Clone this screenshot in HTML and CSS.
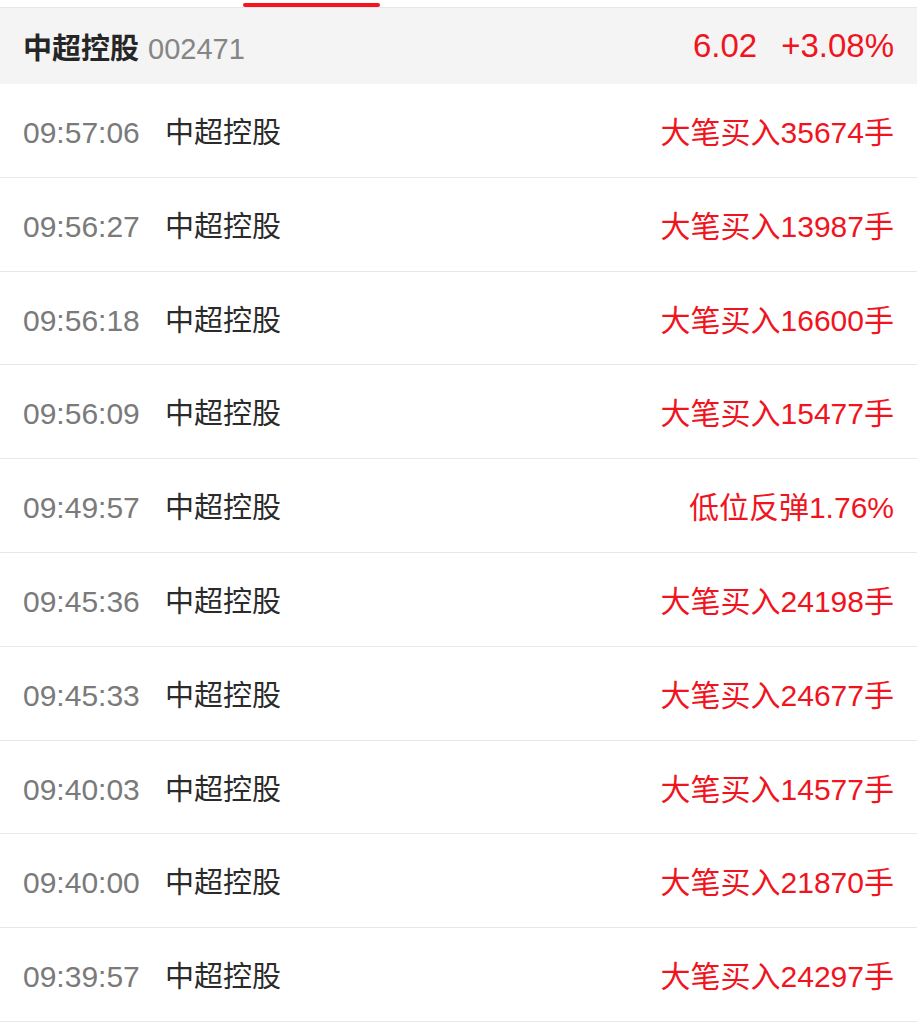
FILE: index.html
```html
<!DOCTYPE html>
<html lang="zh-CN">
<head>
    <meta charset="UTF-8">
    <meta name="viewport" content="width=device-width, initial-scale=1.0">
    <title>中超控股 异动</title>
    <link rel="stylesheet" href="styles.css">
</head>
<body>
    <div class="tabbar">
        <span class="tab-indicator"></span>
    </div>

    <div class="stock-header">
        <div class="stock-title">
            <span class="stock-name">中超控股</span>
            <span class="stock-code">002471</span>
        </div>
        <div class="stock-quote">
            <span class="price">6.02</span>
            <span class="change">+3.08%</span>
        </div>
    </div>

    <ul class="event-list">
        <li class="event-row">
            <span class="event-time">09:57:06</span>
            <span class="event-name">中超控股</span>
            <span class="event-desc">大笔买入35674手</span>
        </li>
        <li class="event-row">
            <span class="event-time">09:56:27</span>
            <span class="event-name">中超控股</span>
            <span class="event-desc">大笔买入13987手</span>
        </li>
        <li class="event-row">
            <span class="event-time">09:56:18</span>
            <span class="event-name">中超控股</span>
            <span class="event-desc">大笔买入16600手</span>
        </li>
        <li class="event-row">
            <span class="event-time">09:56:09</span>
            <span class="event-name">中超控股</span>
            <span class="event-desc">大笔买入15477手</span>
        </li>
        <li class="event-row">
            <span class="event-time">09:49:57</span>
            <span class="event-name">中超控股</span>
            <span class="event-desc">低位反弹1.76%</span>
        </li>
        <li class="event-row">
            <span class="event-time">09:45:36</span>
            <span class="event-name">中超控股</span>
            <span class="event-desc">大笔买入24198手</span>
        </li>
        <li class="event-row">
            <span class="event-time">09:45:33</span>
            <span class="event-name">中超控股</span>
            <span class="event-desc">大笔买入24677手</span>
        </li>
        <li class="event-row">
            <span class="event-time">09:40:03</span>
            <span class="event-name">中超控股</span>
            <span class="event-desc">大笔买入14577手</span>
        </li>
        <li class="event-row">
            <span class="event-time">09:40:00</span>
            <span class="event-name">中超控股</span>
            <span class="event-desc">大笔买入21870手</span>
        </li>
        <li class="event-row">
            <span class="event-time">09:39:57</span>
            <span class="event-name">中超控股</span>
            <span class="event-desc">大笔买入24297手</span>
        </li>
    </ul>
</body>
</html>
```

FILE: styles.css
```css
body {
    margin: 0;
    background: #ffffff;
    font-family: "Liberation Sans", "Noto Sans CJK SC", sans-serif;
    overflow: hidden;
}

.tabbar {
    height: 8px;
    padding: 3px 0 0 243px;
    border-bottom: 1px solid #e6e6e6;
    box-sizing: border-box;
}

.tab-indicator {
    display: block;
    width: 137px;
    height: 4px;
    background: #f5141e;
    border-radius: 2px;
}

.stock-header {
    display: flex;
    justify-content: space-between;
    align-items: center;
    height: 76px;
    padding: 0 23px;
    background: #f4f4f4;
}

.stock-title {
    display: flex;
    align-items: baseline;
    gap: 9px;
}

.stock-name {
    font-family: "Noto Sans CJK SC", sans-serif;
    font-size: 29px;
    font-weight: 700;
    color: #262626;
}

.stock-code {
    font-size: 29px;
    color: #858585;
}

.stock-quote {
    display: flex;
    gap: 24px;
    font-size: 33px;
    color: #f0141e;
}

.event-list {
    list-style: none;
    margin: 0;
    padding: 0;
}

.event-row {
    display: flex;
    align-items: baseline;
    height: 93.8px;
    padding: 24px 23px 0;
    box-sizing: border-box;
    border-bottom: 1px solid #e8e8e8;
}

.event-time {
    width: 142px;
    font-size: 30px;
    color: #7a7a7a;
}

.event-name {
    font-family: "Noto Sans CJK SC", sans-serif;
    font-size: 29px;
    color: #2b2b2b;
}

.event-desc {
    margin-left: auto;
    font-size: 30px;
    color: #f0141e;
}
```
